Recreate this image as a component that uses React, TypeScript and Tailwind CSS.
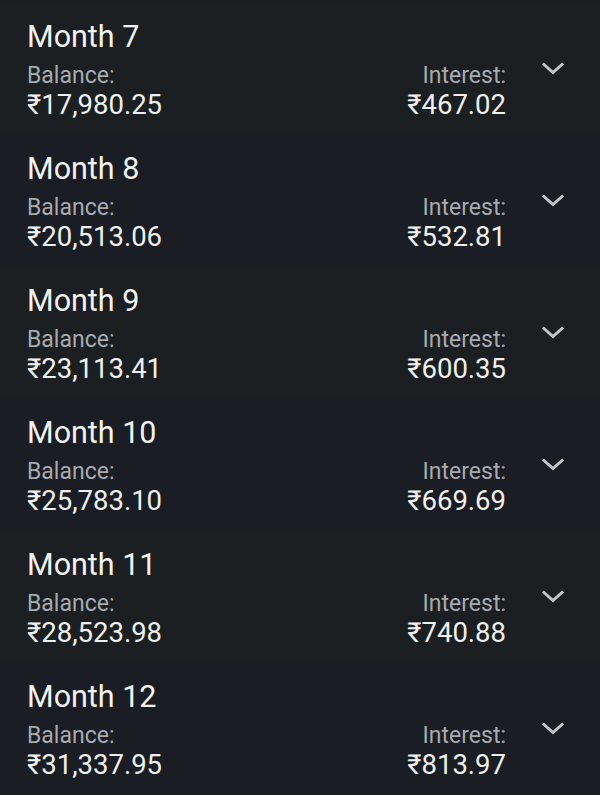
import React from 'react';

type Row = { month: number; balance: string; interest: string };

const rows: Row[] = [
  { month: 7, balance: '₹17,980.25', interest: '₹467.02' },
  { month: 8, balance: '₹20,513.06', interest: '₹532.81' },
  { month: 9, balance: '₹23,113.41', interest: '₹600.35' },
  { month: 10, balance: '₹25,783.10', interest: '₹669.69' },
  { month: 11, balance: '₹28,523.98', interest: '₹740.88' },
  { month: 12, balance: '₹31,337.95', interest: '₹813.97' },
];

function Chevron() {
  return (
    <svg width="24" height="14" viewBox="0 0 24 14" fill="none" className="text-[#c3c5c8]">
      <polyline
        points="3,2.5 12,10.5 21,2.5"
        stroke="currentColor"
        strokeWidth="3"
        strokeLinecap="square"
      />
    </svg>
  );
}

function MonthRow({ row, even }: { row: Row; even: boolean }) {
  return (
    <div
      className={`flex h-[132px] items-start pt-[18px] ${even ? 'bg-[#1b1f22]' : 'bg-[#1a1d23]'}`}
    >
      <div className="flex-1 pl-[27px]">
        <div className="text-[30.5px] leading-[34px] text-[#f2f2f2]">Month {row.month}</div>
        <div className="mt-[9px] flex items-start justify-between">
          <div>
            <div className="text-[23px] leading-[26px] text-[#a7aaae]">Balance:</div>
            <div className="text-[27.5px] leading-[31px] text-[#f0f0f0]">{row.balance}</div>
          </div>
          <div className="text-right">
            <div className="text-[23px] leading-[26px] text-[#a7aaae]">Interest:</div>
            <div className="text-[27.5px] leading-[31px] text-[#f0f0f0]">{row.interest}</div>
          </div>
        </div>
      </div>
      <div className="flex w-[94px] justify-center pt-[42px]">
        <Chevron />
      </div>
    </div>
  );
}

export default function App() {
  return (
    <div
      className="h-[795px] w-[600px] overflow-hidden bg-[#1a1d23]"
      style={{ fontFamily: 'Roboto, "Liberation Sans", sans-serif' }}
    >
      <div className="h-[2px] bg-[#1a1d23]" />
      {rows.map((row, i) => (
        <MonthRow key={row.month} row={row} even={i % 2 === 0} />
      ))}
    </div>
  );
}
